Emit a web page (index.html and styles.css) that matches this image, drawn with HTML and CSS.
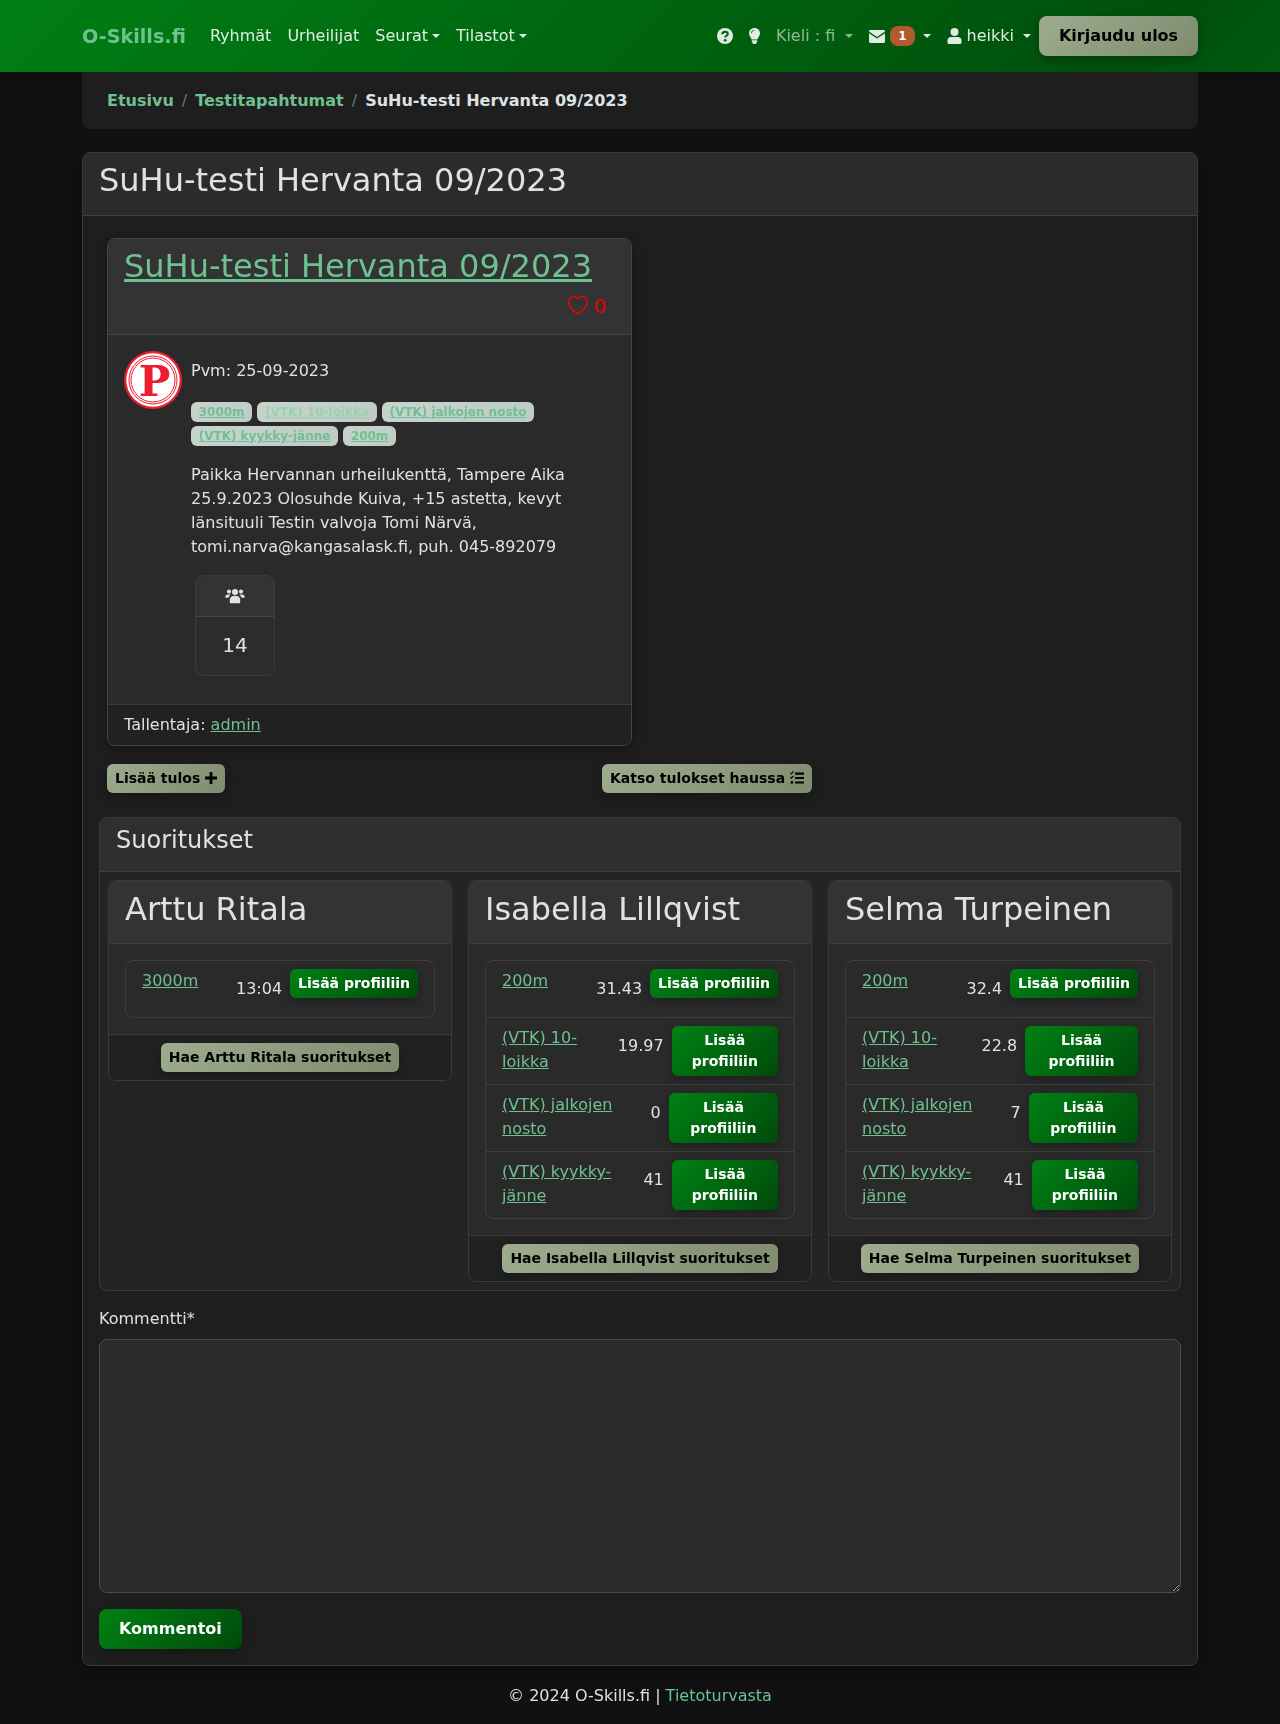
FILE: index.html
```html
<!DOCTYPE html>
<html lang="fi">
<head>
<meta charset="utf-8">
<title>SuHu-testi Hervanta 09/2023</title>
<link rel="stylesheet" href="styles.css">
</head>
<body>
<svg class="defs" width="0" height="0" aria-hidden="true">
  <symbol id="i-users" viewBox="0 0 24 20"><circle cx="12" cy="5" r="3.8"/><circle cx="4.5" cy="4.5" r="2.6"/><circle cx="19.5" cy="4.5" r="2.6"/><path d="M5.500 18v-3.500C5.500 11.500 8 9.800 12 9.800s6.500 1.700 6.500 4.700V18c0 .6-.4 1-1 1h-11c-.6 0-1-.4-1-1z"/><path d="M4 12.200H0v-1.700C0 9 1.200 8 3 8h3c.4 0 .8.100 1.100.200C5.400 9 4.300 10.400 4 12.200zM20 12.200h4v-1.700C24 9 22.800 8 21 8h-3c-.4 0-.8.100-1.100.200C18.600 9 19.700 10.400 20 12.200z"/></symbol>
  <symbol id="i-plus" viewBox="0 0 12 12"><path d="M4.600 0h2.800v4.600H12v2.800H7.400V12H4.600V7.400H0V4.600h4.600z"/></symbol>
  <symbol id="i-tasks" viewBox="0 0 14 14"><path d="M5 1.600h9v2.100H5zM5 6h9v2.100H5zM5 10.400h9v2.100H5z"/><path d="M.4 1.800l1 1L3.400.4M.4 6.200l1 1 2-2.400" fill="none" stroke="currentColor" stroke-width="1.100"/><circle cx="1.900" cy="11.400" r="1.300"/></symbol>
</svg>

<nav class="navbar">
  <div class="container nav-inner">
    <a class="brand" href="#">O-Skills.fi</a>
    <ul class="nav-list">
      <li><a class="nav-link" href="#">Ryhmät</a></li>
      <li><a class="nav-link" href="#">Urheilijat</a></li>
      <li><a class="nav-link caret" href="#">Seurat</a></li>
      <li><a class="nav-link caret" href="#">Tilastot</a></li>
    </ul>
    <ul class="nav-list nav-right">
      <li><a class="nav-link icon-link" href="#">
        <svg class="nav-icon" viewBox="0 0 16 16"><circle cx="8" cy="8" r="8" fill="currentColor"/><path d="M5.200 6.300c.1-1.700 1.300-2.600 2.900-2.600 1.600 0 2.700.9 2.700 2.200 0 1.900-2.600 1.800-2.600 3.500" fill="none" stroke="#005c10" stroke-width="2"/><circle cx="8.200" cy="12.300" r="1.400" fill="#005c10"/></svg>
      </a></li>
      <li><a class="nav-link icon-link" href="#">
        <svg class="nav-icon bulb" viewBox="0 0 12 16"><path fill="currentColor" d="M6 0C2.700 0 .5 2.300.5 5.200c0 2.700 2 3.800 2.600 6.300h5.800c.6-2.500 2.600-3.600 2.600-6.300C11.500 2.300 9.300 0 6 0z"/><path fill="currentColor" d="M3.300 12.300h5.400v1.500c0 .5-.3.8-.8 1L7.500 16h-3l-.4-1.200c-.5-.2-.8-.5-.8-1z"/><path d="M3 5c0-1.500 1.200-2.700 2.700-2.700" fill="none" stroke="#005c10" stroke-width=".9"/></svg>
      </a></li>
      <li><a class="nav-link muted caret caret-kieli" href="#">Kieli : fi</a></li>
      <li><a class="nav-link caret caret-mail" href="#">
        <svg class="nav-icon env" viewBox="0 0 16 13"><path fill="currentColor" d="M1.200 0h13.600C15.500 0 16 .5 16 1.200v.4L8 7 0 1.600v-.4C0 .5.500 0 1.200 0zM0 3.300l8 5.300 8-5.300v8.500c0 .7-.5 1.200-1.200 1.200H1.200C.5 13 0 12.500 0 11.800z"/></svg>
        <span class="badge">1</span>
      </a></li>
      <li><a class="nav-link caret caret-user" href="#">
        <svg class="nav-icon usr" viewBox="0 0 14 16"><circle cx="7" cy="4" r="4" fill="currentColor"/><path fill="currentColor" d="M3.500 9h7C12.500 9 14 10.500 14 12.500v2c0 .8-.7 1.500-1.500 1.500h-11C.7 16 0 15.300 0 14.500v-2C0 10.500 1.500 9 3.500 9z"/></svg>
        heikki
      </a></li>
    </ul>
    <button class="btn btn-olive btn-logout" type="button">Kirjaudu ulos</button>
  </div>
</nav>

<div class="container page-body">
  <ol class="breadcrumb">
    <li><a href="#">Etusivu</a></li>
    <li class="sep">/</li>
    <li><a href="#">Testitapahtumat</a></li>
    <li class="sep">/</li>
    <li class="current">SuHu-testi Hervanta 09/2023</li>
  </ol>

  <main class="card main-card">
    <header class="card-header">
      <h2 class="title">SuHu-testi Hervanta 09/2023</h2>
    </header>
    <div class="main-body">
      <article class="card event-card">
        <header class="card-header event-header">
          <h2 class="title"><a href="#">SuHu-testi Hervanta 09/2023</a></h2>
          <div class="likes">
            <svg class="heart" viewBox="0 0 16 16"><path fill="currentColor" d="m8 2.748-.717-.737C5.600.281 2.514.878 1.400 3.053c-.523 1.023-.641 2.500.314 4.385.920 1.815 2.834 3.989 6.286 6.357 3.452-2.368 5.365-4.542 6.286-6.357.955-1.886.838-3.362.314-4.385C13.486.878 10.400.280 8.717 2.010L8 2.748zM8 15C-7.333 4.868 3.279-3.040 7.824 1.143c.060.055.119.112.176.171a3.120 3.120 0 0 1 .176-.170C12.720-3.042 23.333 4.867 8 15z"/></svg>
            <span>0</span>
          </div>
        </header>
        <div class="event-body">
          <svg class="club-logo" viewBox="0 0 58 58">
            <circle cx="29" cy="29" r="29" fill="#ed1c2e"/>
            <circle cx="29" cy="29" r="26.700" fill="#fff"/>
            <circle cx="29" cy="29" r="24" fill="none" stroke="#ed1c2e" stroke-width="1"/>
            <circle cx="29" cy="29" r="22" fill="none" stroke="#ed1c2e" stroke-width="1"/>
            <text x="30.500" y="45" class="club-letter">P</text>
          </svg>
          <div class="event-info">
            <div class="event-date">Pvm: 25-09-2023</div>
            <div class="tags">
              <a class="tag" href="#">3000m</a>
              <a class="tag tag-light" href="#">(VTK) 10-loikka</a>
              <a class="tag" href="#">(VTK) jalkojen nosto</a>
              <a class="tag" href="#">(VTK) kyykky-jänne</a>
              <a class="tag" href="#">200m</a>
            </div>
            <p class="event-text">Paikka Hervannan urheilukenttä, Tampere Aika 25.9.2023 Olosuhde Kuiva, +15 astetta, kevyt länsituuli Testin valvoja Tomi Närvä, tomi.narva@kangasalask.fi, puh. 045-892079</p>
            <div class="card stat-card">
              <div class="stat-head"><svg class="stat-icon"><use href="#i-users"/></svg></div>
              <div class="stat-value">14</div>
            </div>
          </div>
        </div>
        <footer class="event-footer">Tallentaja: <a href="#">admin</a></footer>
      </article>

      <div class="action-row">
        <div class="action-col"><button class="btn btn-olive btn-sm" type="button">Lisää tulos <svg class="btn-icon"><use href="#i-plus"/></svg></button></div>
        <div class="action-col"><button class="btn btn-olive btn-sm" type="button">Katso tulokset haussa <svg class="btn-icon tasks"><use href="#i-tasks"/></svg></button></div>
      </div>

      <section class="card perf-card">
        <header class="card-header perf-header"><h3 class="perf-title">Suoritukset</h3></header>
        <div class="perf-grid">

          <div class="card athlete">
            <header class="card-header"><h2 class="title">Arttu Ritala</h2></header>
            <div class="athlete-body">
              <ul class="results">
                <li class="result"><a href="#">3000m</a><div class="result-right"><span class="value">13:04</span><button class="btn btn-green btn-sm" type="button">Lisää profiiliin</button></div></li>
              </ul>
            </div>
            <footer class="athlete-footer"><button class="btn btn-olive btn-sm" type="button">Hae Arttu Ritala suoritukset</button></footer>
          </div>

          <div class="card athlete">
            <header class="card-header"><h2 class="title">Isabella Lillqvist</h2></header>
            <div class="athlete-body">
              <ul class="results">
                <li class="result"><a href="#">200m</a><div class="result-right"><span class="value">31.43</span><button class="btn btn-green btn-sm" type="button">Lisää profiiliin</button></div></li>
                <li class="result"><a href="#">(VTK) 10-loikka</a><div class="result-right"><span class="value">19.97</span><button class="btn btn-green btn-sm" type="button">Lisää profiiliin</button></div></li>
                <li class="result"><a href="#">(VTK) jalkojen nosto</a><div class="result-right"><span class="value">0</span><button class="btn btn-green btn-sm" type="button">Lisää profiiliin</button></div></li>
                <li class="result"><a href="#">(VTK) kyykky-jänne</a><div class="result-right"><span class="value">41</span><button class="btn btn-green btn-sm" type="button">Lisää profiiliin</button></div></li>
              </ul>
            </div>
            <footer class="athlete-footer"><button class="btn btn-olive btn-sm" type="button">Hae Isabella Lillqvist suoritukset</button></footer>
          </div>

          <div class="card athlete">
            <header class="card-header"><h2 class="title">Selma Turpeinen</h2></header>
            <div class="athlete-body">
              <ul class="results">
                <li class="result"><a href="#">200m</a><div class="result-right"><span class="value">32.4</span><button class="btn btn-green btn-sm" type="button">Lisää profiiliin</button></div></li>
                <li class="result"><a href="#">(VTK) 10-loikka</a><div class="result-right"><span class="value">22.8</span><button class="btn btn-green btn-sm" type="button">Lisää profiiliin</button></div></li>
                <li class="result"><a href="#">(VTK) jalkojen nosto</a><div class="result-right"><span class="value">7</span><button class="btn btn-green btn-sm" type="button">Lisää profiiliin</button></div></li>
                <li class="result"><a href="#">(VTK) kyykky-jänne</a><div class="result-right"><span class="value">41</span><button class="btn btn-green btn-sm" type="button">Lisää profiiliin</button></div></li>
              </ul>
            </div>
            <footer class="athlete-footer"><button class="btn btn-olive btn-sm" type="button">Hae Selma Turpeinen suoritukset</button></footer>
          </div>

        </div>
      </section>

      <form class="comment-form">
        <label class="comment-label" for="comment">Kommentti*</label>
        <textarea class="comment-input" id="comment"></textarea>
        <button class="btn btn-green btn-comment" type="button">Kommentoi</button>
      </form>
    </div>
  </main>
</div>

<footer class="page-footer">© 2024 O-Skills.fi | <a href="#">Tietoturvasta</a></footer>
</body>
</html>
```

FILE: styles.css
```css
* { box-sizing: border-box; }
html, body { margin: 0; padding: 0; }
body {
  background: #111;
  color: #dee2e6;
  font-family: "DejaVu Sans", sans-serif;
  font-size: 16px;
  line-height: 24px;
}
a { color: #6fc190; }
ul, ol { list-style: none; margin: 0; padding: 0; }
.defs { position: absolute; }
.container { width: 1116px; margin: 0 auto; }
.nav-inner, .page-body, .page-footer { will-change: opacity; }

/* navbar */
.navbar {
  height: 72px;
  background: linear-gradient(135deg, #007f14 0%, #004f0c 88%, #005a0f 100%);
  box-shadow: 0 4px 12px rgba(0, 0, 0, .3);
  position: relative;
}
.nav-inner { display: flex; align-items: center; height: 72px; }
.brand { color: #6fc190; font-size: 19.200px; font-weight: 700; text-decoration: none; margin: 2px 16px 0 0; }
.nav-list { display: flex; align-items: center; }
.nav-right { margin-left: auto; }
.nav-link { display: flex; align-items: center; padding: 8px; color: rgba(255, 255, 255, .88); text-decoration: none; }
.muted { color: rgba(255, 255, 255, .55); }
.caret::after {
  content: "";
  display: inline-block;
  margin-left: 4px;
  border-top: 4.800px solid currentColor;
  border-left: 4.800px solid transparent;
  border-right: 4.800px solid transparent;
}
.caret-kieli::after { margin-left: 10px; }
.caret-mail::after { margin-left: 8px; }
.caret-user::after { margin-left: 9px; }
.nav-icon { display: block; height: 16px; width: 16px; }
.bulb { width: 13px; }
.icon-link { padding: 8px 7px 8px 8px; }
.env { margin-right: 5px; height: 13px; }
.usr { width: 15px; margin-right: 5px; }
.badge {
  background: #b15a2f;
  color: #fff;
  font-size: 12px;
  font-weight: 700;
  line-height: 12px;
  padding: 4px 8px;
  border-radius: 8px;
}
.btn {
  border: 0;
  font-family: inherit;
  font-weight: 700;
  border-radius: 6px;
  cursor: pointer;
  box-shadow: 0 4px 10px rgba(0, 0, 0, .25);
}
.btn-olive { background: linear-gradient(135deg, #9dab8e 0%, #7e8b6e 100%); color: #000; }
.btn-green { background: linear-gradient(135deg, #008214 0%, #004a0b 100%); color: #fff; }
.btn-logout { font-size: 16px; line-height: 24px; height: 40px; padding: 8px 0; width: 159px; border-radius: 8px; white-space: nowrap; }
.btn-sm { font-size: 14px; line-height: 21px; padding: 4px 8px; }
.btn-icon { width: 12px; height: 12px; fill: currentColor; vertical-align: -1px; }
.tasks { width: 14px; height: 14px; vertical-align: -2px; }

/* breadcrumb */
.breadcrumb {
  display: flex;
  gap: 8px;
  height: 57px;
  padding: 17px 25px 16px;
  background: #1e1e1e;
  border-radius: 0 0 8px 8px;
  font-weight: 700;
  margin-bottom: 23px;
}
.breadcrumb a { text-decoration: none; }
.sep { color: #6c757d; font-weight: 400; }

/* cards */
.card { border: 1px solid #3a3a3a; border-radius: 8px; overflow: hidden; }
.card-header { padding: 8px 16px; background: #2b2b2b; border-bottom: 1px solid #3f3f3f; }
.title { font-size: 32px; font-weight: 400; line-height: 38.400px; margin: 0 0 8px; color: #dee2e6; }
.main-card { background: #1e1e1e; box-shadow: 0 8px 24px rgba(0, 0, 0, .3); }
.main-body { padding: 22px 16px 16px; }

.event-card { width: 525px; margin-left: 8px; background: #2a2a2a; box-shadow: 0 4px 12px rgba(0, 0, 0, .3); border-color: #444; }
.event-header { background: #333; height: 96px; border-bottom-color: #444; }
.likes { display: flex; align-items: center; justify-content: flex-end; gap: 6px; color: #f00; font-size: 20px; padding-right: 8px; }
.heart { width: 20px; height: 20px; display: block; }
.event-body { display: flex; gap: 9px; padding: 16px 16px 28px; }
.club-logo { width: 58px; height: 58px; flex: none; }
.club-letter { font-family: "DejaVu Serif", serif; font-weight: 700; font-size: 42px; fill: #ed1c2e; text-anchor: middle; }
.event-info { flex: 1; padding-top: 8px; }
.event-date { margin-bottom: 19px; }
.tags { display: flex; flex-wrap: wrap; gap: 4px 5px; width: 400px; padding-bottom: 17px; }
.tag {
  background: linear-gradient(135deg, #c8d3ce, #bfcbc5);
  color: #6fc190;
  font-size: 12px;
  font-weight: 700;
  line-height: 20px;
  height: 20px;
  padding: 0 7.700px;
  border-radius: 6px;
}
.tag-light { color: #9bd2ab; }
.event-text { width: 400px; margin: 0 0 16px; }
.stat-card { width: 80px; margin-left: 4px; background: #2c2c2c; }
.stat-head { display: flex; justify-content: center; align-items: center; height: 41px; background: #333; border-bottom: 1px solid #444; }
.stat-icon { width: 20px; height: 16px; fill: #dee2e6; display: block; }
.stat-value { text-align: center; font-size: 20px; line-height: 56px; padding-bottom: 2px; }
.event-footer { padding: 8px 16px; height: 41px; background: #212121; border-top: 1px solid #3a3a3a; }

.action-row { display: flex; padding: 18px 0 24px 8px; }
.action-col { width: 495px; }
.action-col .btn { display: block; }

/* performances */
.perf-card { background: #242424; }
.perf-header { background: #2f2f2f; }
.perf-title { font-size: 24px; font-weight: 400; line-height: 28.800px; margin: 0 0 8px; }
.perf-grid { display: grid; grid-template-columns: repeat(3, 344px); gap: 16px; padding: 8px; align-items: start; }
.athlete { background: #2a2a2a; }
.athlete .card-header { background: #333; }
.athlete .title { line-height: 38px; padding-top: 1px; margin-bottom: 7px; }
.athlete-body { padding: 16px; }
.results { border: 1px solid #3d3d3d; border-radius: 8px; }
.result { display: flex; justify-content: space-between; padding: 8px 16px; border-top: 1px solid #3d3d3d; }
.result:first-child { border-top: 0; }
.result-right { display: flex; align-items: flex-start; }
.value { padding: 8px; }
.result-right .btn { flex: 0 1 auto; }
.athlete-footer { padding: 8px 16px; text-align: center; background: #212121; border-top: 1px solid #3a3a3a; }

/* comment */
.comment-form { padding-top: 16px; }
.comment-label { display: block; margin-bottom: 8px; }
.comment-input {
  display: block;
  width: 100%;
  height: 254px;
  background: #2b2b2b;
  border: 1px solid #4a4a4a;
  border-radius: 8px;
  color: #dee2e6;
  margin-bottom: 16px;
}
.btn-comment { font-size: 16px; line-height: 24px; height: 40px; padding: 8px 20px; border-radius: 8px; display: block; }

/* footer */
.page-footer { text-align: center; padding-top: 18px; height: 58px; }
.page-footer a { text-decoration: none; }
```
